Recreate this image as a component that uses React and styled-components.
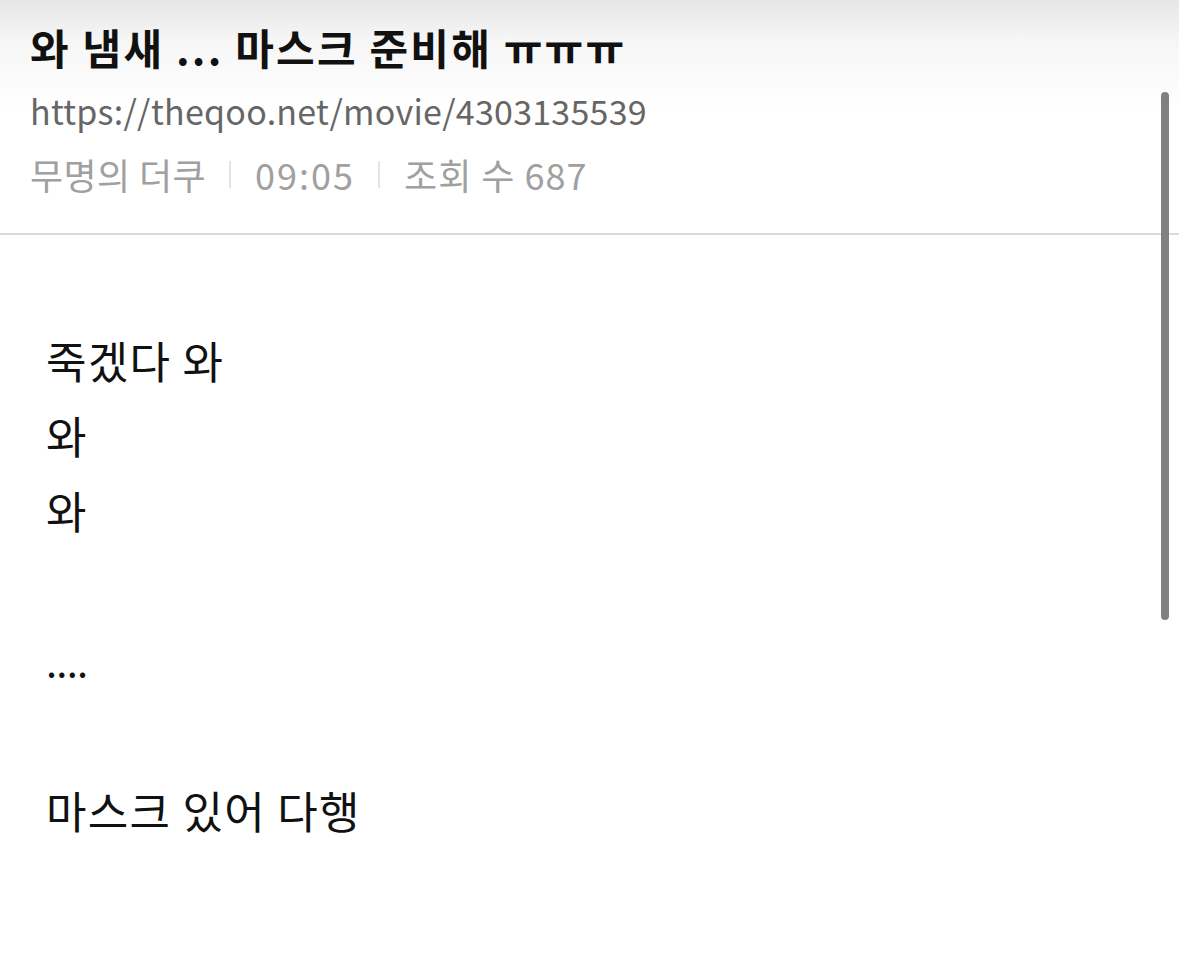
import React from "react";
import styled, { createGlobalStyle } from "styled-components";

const Global = createGlobalStyle`
  html, body { margin: 0; padding: 0; background: #fff; }
  body { font-family: "Noto Sans CJK KR", "Noto Sans", sans-serif; }
`;

const Page = styled.div`
  position: relative;
  width: 1179px;
  height: 963px;
  overflow: hidden;
  background: #fff;
`;

const Header = styled.header`
  padding: 15px 0 28px 30px;
  border-bottom: 2px solid #dadada;
  background: linear-gradient(to bottom, #e6e6e6 0px, #f6f6f6 40px, #ffffff 110px);
`;

const Title = styled.h1`
  margin: 0;
  font-size: 42px;
  font-weight: 700;
  line-height: 64px;
  color: #111;
  letter-spacing: 2.2px;
`;

const Url = styled.div`
  font-size: 34px;
  line-height: 64px;
  color: #666;
  letter-spacing: 0.25px;
`;

const Meta = styled.div`
  display: flex;
  align-items: center;
  font-size: 36px;
  line-height: 62px;
  color: #a0a0a0;
`;

const MetaItem = styled.span`
  letter-spacing: ${(p) => p.$spacing || 0.4}px;
`;

const Sep = styled.span`
  display: inline-block;
  width: 2px;
  height: 27px;
  background: #e4e4e4;
  margin: 0 24px 0 23px;
`;

const Body = styled.main`
  padding: 88px 0 0 46px;
  font-size: 44px;
  line-height: 75px;
  color: #111;
  letter-spacing: 1.3px;
`;

const Line = styled.p`
  margin: 0;
  min-height: 75px;
  font-size: ${(p) => (p.$dots ? "40px" : "inherit")};
  letter-spacing: ${(p) => (p.$dots ? "-0.8px" : "inherit")};
`;

const Scrollbar = styled.div`
  position: absolute;
  right: 10px;
  top: 92px;
  width: 8px;
  height: 528px;
  border-radius: 4px;
  background: #808080;
`;

const lines = ["죽겠다 와", "와", "와", "", "....", "", "마스크 있어 다행"];

export default function App() {
  return (
    <Page>
      <Global />
      <Header>
        <Title>와 냄새 ... 마스크 준비해 ㅠㅠㅠ</Title>
        <Url>https://theqoo.net/movie/4303135539</Url>
        <Meta>
          <MetaItem>무명의 더쿠</MetaItem>
          <Sep />
          <MetaItem $spacing={2}>09:05</MetaItem>
          <Sep />
          <MetaItem $spacing={1}>조회 수 687</MetaItem>
        </Meta>
      </Header>
      <Body>
        {lines.map((l, i) => (
          <Line key={i} $dots={l === "...."}>
            {l}
          </Line>
        ))}
      </Body>
      <Scrollbar />
    </Page>
  );
}
